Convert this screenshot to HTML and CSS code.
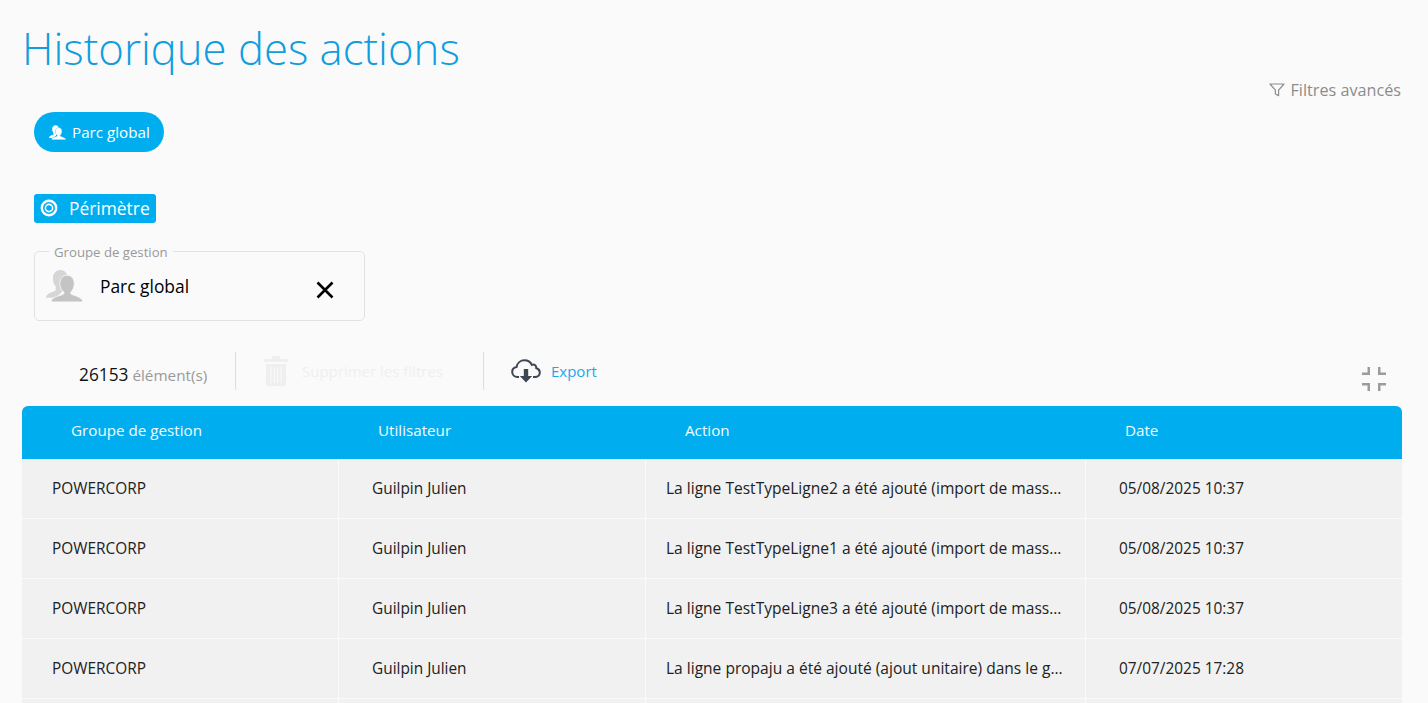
FILE: index.html
```html
<!DOCTYPE html>
<html lang="fr">

<head>
    <meta charset="UTF-8">
    <meta name="viewport" content="width=device-width, initial-scale=1.0">
    <title>Historique des actions</title>
    <link rel="stylesheet" href="styles.css">
</head>

<body>

    <h1 class="page-title">Historique des actions</h1>

    <div class="advanced-row">
        <a class="advanced-filters">
            <svg class="filter-icon" viewBox="0 0 16 14" width="16" height="14">
                <path d="M1 1h14L9.600 7.200V12.600L6.400 11V7.200z" fill="none" stroke="#8c8c8c" stroke-width="1.200" stroke-linejoin="round" />
            </svg>
            Filtres avancés
        </a>
    </div>

    <div class="chip-row">
        <button class="chip">
            <svg viewBox="0 0 36 31" width="17" height="15">
                <path d="M14 0c4 0 7 3 7 7.500 0 3.500-1.500 6.500-3.500 8V19L10 27H0c0-3 2.500-4.500 7-6 1.500-.5 2.500-1 2.500-2.500V16C7.500 14 6.500 11 6.800 7.500 7 3 10 0 14 0z" fill="#fff" />
                <path d="M5 31c0-3 3-5 10-6.800 1.500-.5 2.500-1 2.500-2.200v-.5c-2.500-1.500-4-4.500-4-8.500 0-4.800 3-8 7-8s7 3.200 7 8c0 4-1.500 7-3.500 8.500v.5c0 1.200 1 1.700 2.500 2.200 6 1.800 9 3.800 9.500 6.800z" fill="#fff" stroke="#00aeef" stroke-width=".8" />
            </svg>
            Parc global
        </button>
    </div>

    <div class="section-row">
        <div class="section-tag">
            <svg viewBox="0 0 18 18" width="18" height="18">
                <circle cx="9" cy="9" r="7.200" fill="none" stroke="#fff" stroke-width="2.400" />
                <circle cx="9" cy="9" r="3.600" fill="none" stroke="#fff" stroke-width="1.600" />
            </svg>
            <span>Périmètre</span>
        </div>
    </div>

    <fieldset class="scope-box">
        <legend>Groupe de gestion</legend>
        <svg class="scope-icon" viewBox="0 0 36 31" width="37" height="32">
            <path d="M14 0c4 0 7 3 7 7.500 0 3.500-1.500 6.500-3.500 8V19L10 27H0c0-3 2.500-4.500 7-6 1.500-.5 2.500-1 2.500-2.500V16C7.500 14 6.500 11 6.800 7.500 7 3 10 0 14 0z" fill="#d6d6d6" />
            <path d="M5 31c0-3 3-5 10-6.800 1.500-.5 2.500-1 2.500-2.200v-.5c-2.500-1.500-4-4.500-4-8.500 0-4.800 3-8 7-8s7 3.200 7 8c0 4-1.500 7-3.500 8.500v.5c0 1.200 1 1.700 2.500 2.200 6 1.800 9 3.800 9.500 6.800z" fill="#c4c4c4" stroke="#fafafa" stroke-width=".8" />
        </svg>
        <span class="scope-name">Parc global</span>
        <svg class="scope-close" viewBox="0 0 18 18" width="18" height="18">
            <path d="M1.500 1.500l15 15M16.500 1.500l-15 15" stroke="#000" stroke-width="2.600" fill="none" />
        </svg>
    </fieldset>

    <div class="toolbar">
        <div class="count"><b>26153</b> <span>élément(s)</span></div>
        <div class="tool-clear">
            <svg viewBox="0 0 24 30" width="24" height="30">
                <path d="M8 3V0h8v3h8v3H0V3z" fill="#efefef" />
                <path d="M2 8h20v20a2 2 0 0 1-2 2H4a2 2 0 0 1-2-2z" fill="#efefef" />
                <path d="M7 11v16M10.300 11v16M13.700 11v16M17 11v16" stroke="#fafafa" stroke-width="1" />
            </svg>
            <span>Supprimer les filtres</span>
        </div>
        <div class="tool-export">
            <svg viewBox="0 0 30 24" width="30" height="24">
                <path d="M8 18H6.500C3.500 18 1.200 16 1.200 13c0-2.600 1.800-4.500 4.300-4.900C6.200 4 9.500 1.300 13.500 1.300c3.300 0 6 1.800 7.300 4.500 1-.5 2.500-.4 3.400.5.800.7 1.100 1.700 1 2.700 2 .7 3.600 2.300 3.600 4.500 0 2.600-2 4.500-5 4.500H22" fill="none" stroke="#3d4651" stroke-width="2" />
                <path d="M12.800 10h4.400v7h4L15 23.600 8.800 17h4z" fill="#3d4651" />
            </svg>
            <span>Export</span>
        </div>
        <svg class="collapse-icon" viewBox="0 0 24 24" width="24" height="24">
            <path d="M5.500 0H8v8H0V5.500h5.500zM16 0h2.500v5.500H24V8h-8zM0 16h8v8H5.500v-5.500H0zM16 16h8v2.500h-5.500V24H16z" fill="#9c9c9c" />
        </svg>
    </div>

    <div class="grid">
        <div class="grid-head">
            <div class="head-cell">Groupe de gestion</div>
            <div class="head-cell">Utilisateur</div>
            <div class="head-cell">Action</div>
            <div class="head-cell">Date</div>
        </div>
        <div class="grid-row">
            <div class="cell">POWERCORP</div>
            <div class="cell">Guilpin Julien</div>
            <div class="cell">La ligne TestTypeLigne2 a été ajouté (import de mass...</div>
            <div class="cell">05/08/2025 10:37</div>
        </div>
        <div class="grid-row">
            <div class="cell">POWERCORP</div>
            <div class="cell">Guilpin Julien</div>
            <div class="cell">La ligne TestTypeLigne1 a été ajouté (import de mass...</div>
            <div class="cell">05/08/2025 10:37</div>
        </div>
        <div class="grid-row">
            <div class="cell">POWERCORP</div>
            <div class="cell">Guilpin Julien</div>
            <div class="cell">La ligne TestTypeLigne3 a été ajouté (import de mass...</div>
            <div class="cell">05/08/2025 10:37</div>
        </div>
        <div class="grid-row">
            <div class="cell">POWERCORP</div>
            <div class="cell">Guilpin Julien</div>
            <div class="cell">La ligne propaju a été ajouté (ajout unitaire) dans le g...</div>
            <div class="cell">07/07/2025 17:28</div>
        </div>
        <div class="grid-row">
            <div class="cell"></div>
            <div class="cell"></div>
            <div class="cell"></div>
            <div class="cell"></div>
        </div>
    </div>

</body>

</html>
```

FILE: styles.css
```css
html,
body {
    height: 100%;
    overflow: hidden;
}

body {
    margin: 0;
    padding: 0 26px 0 22px;
    background-color: #fafafa;
    font-family: 'Open Sans', sans-serif;
    font-size: 14px;
    color: #222;
}

.page-title {
    margin: 0;
    padding-top: 18px;
    height: 60px;
    font-size: 43.700px;
    line-height: 61px;
    font-weight: 300;
    color: #0f9ddf;
}

.advanced-row {
    display: flex;
    justify-content: flex-end;
    height: 35px;
    margin-top: -1px;
}

.advanced-filters {
    display: flex;
    align-items: center;
    gap: 6px;
    height: 26px;
    padding-right: 1px;
    font-size: 16.200px;
    color: #8c8c8c;
}

.chip-row {
    padding-left: 12px;
}

.chip {
    display: flex;
    align-items: center;
    gap: 6px;
    height: 40px;
    padding: 0 14px 0 15px;
    border: none;
    border-radius: 20px;
    background-color: #00aeef;
    color: #fff;
    font-family: 'Open Sans', sans-serif;
    font-size: 15.200px;
}

.section-row {
    display: flex;
    padding: 42px 0 0 12px;
}

.section-tag {
    display: flex;
    align-items: center;
    gap: 11px;
    box-sizing: border-box;
    height: 29px;
    padding: 0 6px 2px;
    border-radius: 3px;
    background-color: #00aeef;
    color: #fff;
    font-size: 17.400px;
}

.scope-box {
    display: flex;
    align-items: center;
    box-sizing: border-box;
    width: 331px;
    height: 78px;
    margin: 20px 0 0 12px;
    padding: 0 30px 7px 11px;
    border: 1px solid #e2e2e2;
    border-radius: 5px;
    min-width: 0;
}

.scope-box legend {
    margin-left: 3px;
    padding: 2px 5px 0;
    font-size: 13.200px;
    line-height: 14px;
    color: #999;
}

.scope-icon {
    flex: none;
}

.scope-name {
    flex: 1;
    margin-left: 17px;
    font-size: 17.400px;
    color: #000;
}

.scope-close {
    margin-top: 8px;
}

.toolbar {
    display: flex;
    align-items: center;
    height: 38px;
    margin-top: 31px;
    padding-left: 57px;
}

.count {
    width: 156px;
    height: 38px;
    line-height: 45px;
    border-right: 1px solid #ddd;
    font-size: 15.300px;
    color: #999;
}

.count b {
    font-size: 17.300px;
    font-weight: 400;
    color: #111;
}

.tool-clear {
    display: flex;
    align-items: center;
    gap: 14px;
    box-sizing: border-box;
    width: 248px;
    height: 38px;
    padding-left: 28px;
    border-right: 1px solid #ddd;
    font-size: 15px;
    color: #efefef;
}

.tool-export {
    display: flex;
    align-items: center;
    gap: 10px;
    padding-left: 27px;
    font-size: 15px;
    color: #1da7ea;
}

.collapse-icon {
    margin-left: auto;
    margin-right: 16px;
    margin-top: 16px;
}

.grid {
    margin-top: 16px;
}

.grid-head {
    display: grid;
    grid-template-columns: 317px 307px 440px 1fr;
    box-sizing: border-box;
    height: 53px;
    padding-bottom: 6px;
    align-items: center;
    border-radius: 6px 6px 0 0;
    background-color: #00aeef;
}

.head-cell {
    padding-left: 39px;
    font-size: 15.200px;
    color: #f2fbff;
}

.head-cell:first-child {
    padding-left: 49px;
}

.grid-row {
    display: grid;
    grid-template-columns: 317px 307px 440px 1fr;
    height: 59px;
    border-bottom: 1px solid #fafafa;
    background-color: #f1f1f1;
}

.cell {
    padding-left: 30px;
    border-right: 1px solid #fafafa;
    font-size: 15.400px;
    line-height: 60px;
    color: #222;
    white-space: nowrap;
}

.cell:nth-child(2) {
    padding-left: 33px;
}

.cell:nth-child(3) {
    padding-left: 20px;
    font-size: 15.550px;
    line-height: 59px;
}

.cell:last-child {
    padding-left: 33px;
    border-right: none;
}
```
